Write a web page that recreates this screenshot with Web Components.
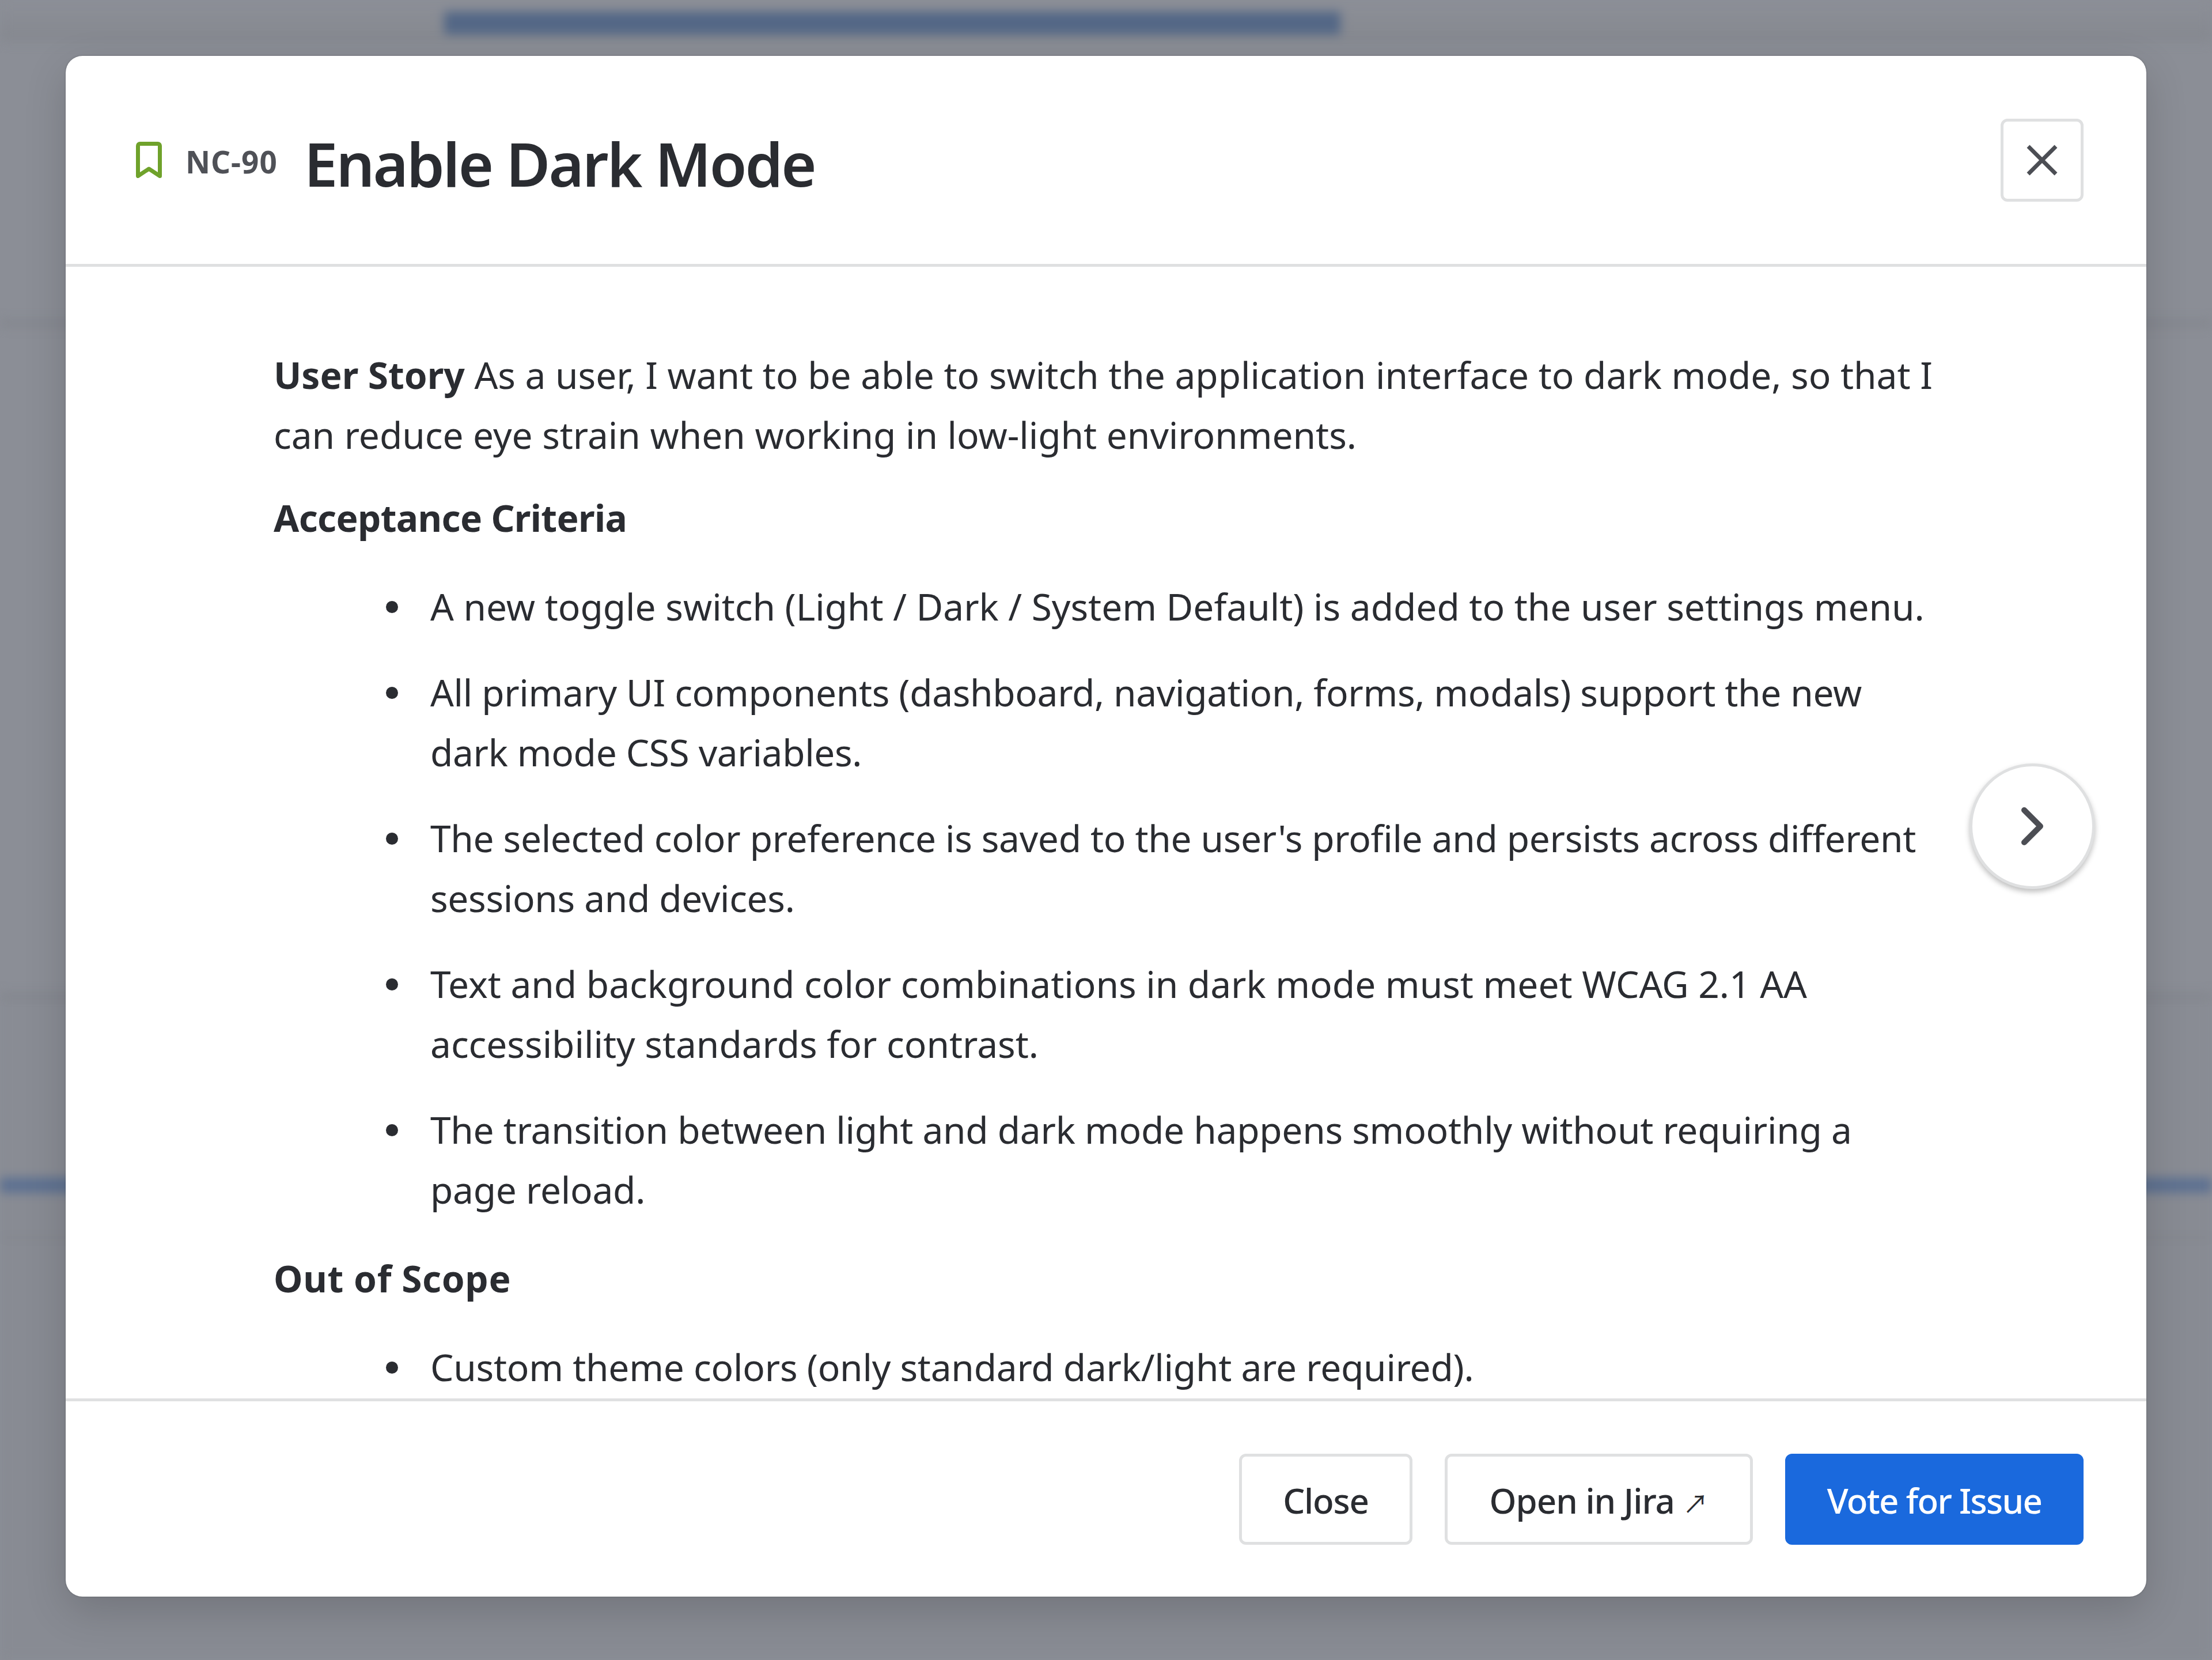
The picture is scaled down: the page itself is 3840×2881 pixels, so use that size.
<!DOCTYPE html>
<html lang="en">
<head>
<meta charset="utf-8">
<title>NC-90 Enable Dark Mode</title>
<style>
    html, body { margin: 0; background: #8a8d95; }
    body { font-family: "Noto Sans", "Open Sans", sans-serif; color: #2a2c31; }
</style>
</head>
<body>
<issue-page>
    <issue-modal>
        <issue-header slot="header" key="NC-90" title-text="Enable Dark Mode"></issue-header>
        <issue-story>
            <story-para style="letter-spacing:-0.03px"><b>User Story</b> As a user, I want to be able to switch the application interface to dark mode, so that I can reduce eye strain when working in low-light environments.</story-para>
            <story-heading style="letter-spacing:-0.65px">Acceptance Criteria</story-heading>
            <story-bullet style="letter-spacing:-0.03px">A new toggle switch (Light / Dark / System Default) is added to the user settings menu.</story-bullet>
            <story-bullet style="letter-spacing:-0.35px">All primary UI components (dashboard, navigation, forms, modals) support the new dark mode CSS variables.</story-bullet>
            <story-bullet style="letter-spacing:-0.33px">The selected color preference is saved to the user's profile and persists across different sessions and devices.</story-bullet>
            <story-bullet style="letter-spacing:-0.02px">Text and background color combinations in dark mode must meet WCAG 2.1 AA accessibility standards for contrast.</story-bullet>
            <story-bullet style="letter-spacing:-0.27px">The transition between light and dark mode happens smoothly without requiring a page reload.</story-bullet>
            <story-heading style="letter-spacing:0.6px;margin-top:50px">Out of Scope</story-heading>
            <story-bullet style="letter-spacing:-0.25px">Custom theme colors (only standard dark/light are required).</story-bullet>
        </issue-story>
        <action-button slot="footer" style="width:301px">Close</action-button>
        <action-button slot="footer" style="width:535px;letter-spacing:-1px">Open in Jira <span style="font-family:'Noto Sans CJK JP';font-size:44px;font-weight:400;letter-spacing:0">↗</span></action-button>
        <action-button slot="footer" primary style="width:518px">Vote for Issue</action-button>
    </issue-modal>
</issue-page>

<script>
// blurred board behind the dialog plus the layer that holds the dialog
class IssuePage extends HTMLElement {
    constructor() {
        super();
        this.attachShadow({ mode: 'open' });
        this.shadowRoot.innerHTML = `
            <style>
            :host { display: block; position: relative; width: 3840px; height: 2881px; overflow: hidden; background: #8b8e96; }
            .board { display: flex; flex-direction: column; height: 100%; filter: blur(9px); }
            .top { height: 72px; flex: none; padding: 0 0 0 771px; background: linear-gradient(#8c8f97, #85888f); box-sizing: border-box; }
            .pill { width: 1556px; height: 40px; margin-top: 20px; background: #536786; }
            .rule { height: 10px; background: #82858c; flex: none; }
            .lane { flex: none; }
            .bar { height: 26px; flex: none; background: #5c7091; }
            .low { flex: 1; background: #888b93; }
            .overlay { position: absolute; inset: 0; padding: 97px 114px 110px; box-sizing: border-box; display: flex; }
            </style>
            <div class="board">
                <div class="top"><div class="pill"></div></div>
                <div class="lane" style="height:484px"></div>
                <div class="rule"></div>
                <div class="lane" style="height:1158px"></div>
                <div class="rule"></div>
                <div class="lane" style="height:310px;background:#898c94"></div>
                <div class="bar"></div>
                <div class="lane" style="height:75px;background:#888b93"></div>
                <div class="rule" style="height:6px"></div>
                <div class="low"></div>
            </div>
            <div class="overlay"><slot></slot></div>
        `;
    }
}

class IssueModal extends HTMLElement {
    constructor() {
        super();
        this.attachShadow({ mode: 'open' });
        this.shadowRoot.innerHTML = `
            <style>
            :host { display: flex; flex-direction: column; flex: 1; position: relative; background: #fff; border-radius: 29px; box-shadow: 0 24px 72px rgba(0,0,0,.16), 0 0 3px rgba(0,0,0,.25); }
            header { flex: none; height: 366px; box-sizing: border-box; border-bottom: 5px solid #dfe0e1; }
            main { flex: 1; min-height: 0; overflow: hidden; }
            footer { flex: none; display: flex; justify-content: flex-end; gap: 56px; padding: 91px 109px 90px; border-top: 5px solid #dfe0e1; }
            nav-arrow { position: absolute; right: 89px; top: 50%; transform: translateY(-50%); }
            </style>
            <header><slot name="header"></slot></header>
            <main><slot></slot></main>
            <footer><slot name="footer"></slot></footer>
            <nav-arrow></nav-arrow>
        `;
    }
}

class IssueHeader extends HTMLElement {
    constructor() {
        super();
        this.attachShadow({ mode: 'open' });
    }

    connectedCallback() {
        if (this._initialized) return;
        this._initialized = true;
        this.shadowRoot.innerHTML = `
            <style>
            :host { display: flex; align-items: center; height: 361px; padding: 0 109px 0 122px; box-sizing: border-box; }
            svg.mark { width: 45px; height: 63px; flex: none; margin-right: 41px; }
            .key { font-size: 53px; font-weight: 700; color: #4f5157; margin: 6px 46px 0 0; letter-spacing: 1px; }
            h1 { flex: 1; margin: 12px 0 0; font-size: 105px; font-weight: 600; line-height: 1.2; color: #2a2c31; letter-spacing: -2.9px; }
            button { width: 144px; height: 144px; box-sizing: border-box; padding: 0; background: #fff; border: 5px solid #dfe0e1; border-radius: 12px; display: flex; align-items: center; justify-content: center; }
            button svg { width: 54px; height: 54px; }
            </style>
            <svg class="mark" viewBox="0 0 45 63" fill="none"><path d="M3.5 59.5V7A3.5 3.5 0 0 1 7 3.5H38A3.5 3.5 0 0 1 41.500 7V59.500L22.500 47Z" stroke="#6fa22b" stroke-width="7" stroke-linejoin="round"/></svg>
            <span class="key">${this.getAttribute('key')}</span>
            <h1>${this.getAttribute('title-text')}</h1>
            <button aria-label="Close"><svg viewBox="0 0 54 54"><path d="M3 3L51 51M51 3L3 51" stroke="#4c4e54" stroke-width="7"/></svg></button>
        `;
    }
}

class IssueStory extends HTMLElement {
    constructor() {
        super();
        this.attachShadow({ mode: 'open' });
        this.shadowRoot.innerHTML = `
            <style>
            :host { display: block; padding: 136px 361px 0; font-size: 64px; line-height: 104px; color: #2a2c31; }
            </style>
            <slot></slot>
        `;
    }
}

class StoryPara extends HTMLElement {
    constructor() {
        super();
        this.attachShadow({ mode: 'open' });
        this.shadowRoot.innerHTML = `
            <style>
            :host { display: block; margin-bottom: 40px; }
            </style>
            <slot></slot>
        `;
    }
}

class StoryHeading extends HTMLElement {
    constructor() {
        super();
        this.attachShadow({ mode: 'open' });
        this.shadowRoot.innerHTML = `
            <style>
            :host { display: block; font-weight: 700; margin-bottom: 50px; }
            </style>
            <slot></slot>
        `;
    }
}

class StoryBullet extends HTMLElement {
    constructor() {
        super();
        this.attachShadow({ mode: 'open' });
        this.shadowRoot.innerHTML = `
            <style>
            :host { display: flex; padding-left: 195px; margin-bottom: 45px; }
            .dot { flex: none; width: 21px; height: 21px; border-radius: 50%; background: #2a2c31; margin: 42px 56px 0 0; }
            </style>
            <span class="dot"></span>
            <span><slot></slot></span>
        `;
    }
}

class ActionButton extends HTMLElement {
    constructor() {
        super();
        this.attachShadow({ mode: 'open' });
        this.shadowRoot.innerHTML = `
            <style>
            :host { display: flex; align-items: center; justify-content: center; box-sizing: border-box; height: 158px; border: 5px solid #dfe0e1; border-radius: 12px; background: #fff; color: #2a2c31; font-size: 60px; font-weight: 500; letter-spacing: -1.2px; }
            :host([primary]) { background: #1a69dd; border-color: #1a69dd; color: #fff; letter-spacing: -1.7px; }
            span { margin-top: 3px; }
            </style>
            <span><slot></slot></span>
        `;
    }
}

class NavArrow extends HTMLElement {
    constructor() {
        super();
        this.attachShadow({ mode: 'open' });
        this.shadowRoot.innerHTML = `
            <style>
            :host { display: flex; align-items: center; justify-content: center; width: 218px; height: 218px; box-sizing: border-box; border: 5px solid #dfe0e1; border-radius: 50%; background: #fff; box-shadow: 0 5px 10px rgba(0,0,0,.25); }
            svg { width: 50px; height: 80px; }
            </style>
            <svg viewBox="0 0 50 80" fill="none"><path d="M11 12L39 40L11 68" stroke="#4c4e54" stroke-width="10" stroke-linecap="round" stroke-linejoin="round"/></svg>
        `;
    }
}

customElements.define('issue-page', IssuePage);
customElements.define('issue-modal', IssueModal);
customElements.define('issue-header', IssueHeader);
customElements.define('issue-story', IssueStory);
customElements.define('story-para', StoryPara);
customElements.define('story-heading', StoryHeading);
customElements.define('story-bullet', StoryBullet);
customElements.define('action-button', ActionButton);
customElements.define('nav-arrow', NavArrow);
</script>
</body>
</html>
